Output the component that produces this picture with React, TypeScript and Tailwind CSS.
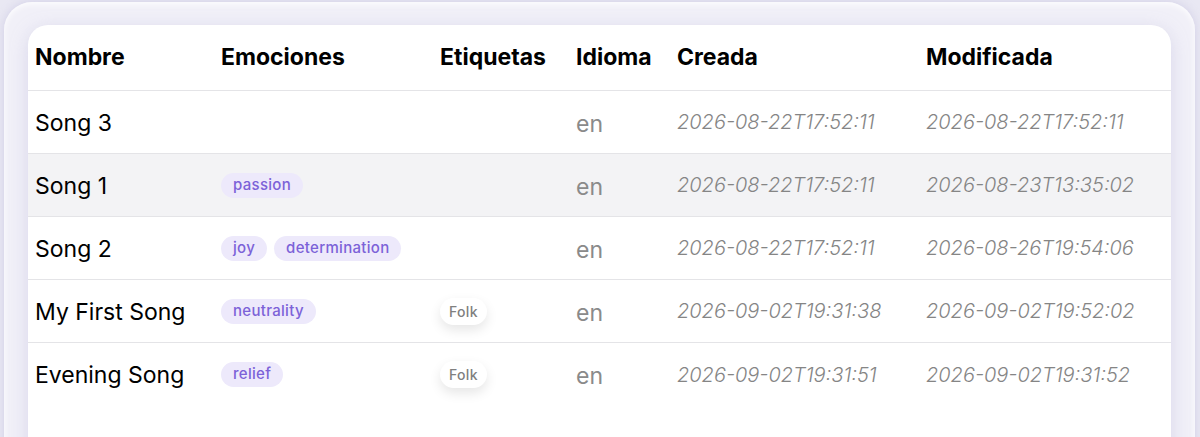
import React from "react";

type Row = {
  name: string;
  emotions: string[];
  tags: string[];
  lang: string;
  created: string;
  modified: string;
};

const rows: Row[] = [
  { name: "Song 3", emotions: [], tags: [], lang: "en", created: "2026-08-22T17:52:11", modified: "2026-08-22T17:52:11" },
  { name: "Song 1", emotions: ["passion"], tags: [], lang: "en", created: "2026-08-22T17:52:11", modified: "2026-08-23T13:35:02" },
  { name: "Song 2", emotions: ["joy", "determination"], tags: [], lang: "en", created: "2026-08-22T17:52:11", modified: "2026-08-26T19:54:06" },
  { name: "My First Song", emotions: ["neutrality"], tags: ["Folk"], lang: "en", created: "2026-09-02T19:31:38", modified: "2026-09-02T19:52:02" },
  { name: "Evening Song", emotions: ["relief"], tags: ["Folk"], lang: "en", created: "2026-09-02T19:31:51", modified: "2026-09-02T19:31:52" },
];

const cols = "grid grid-cols-[186px_219px_136px_101px_249px_1fr]";

export default function App() {
  return (
    <div className="h-[437px] w-[1200px] overflow-hidden bg-[#e9e8f3] font-['Inter',sans-serif]">
      <div className="ml-[4px] mr-[5px] mt-[2px] h-[600px] rounded-[28px] bg-[#f1f0f8] px-[24px] pt-[23px] shadow-[inset_0_2px_6px_rgba(255,255,255,0.9),0_0_10px_rgba(180,176,215,0.45)]">
        <div className="h-[560px] rounded-[20px] bg-white shadow-[0_4px_18px_rgba(170,165,210,0.35)]">
          <div className={`${cols} h-[66px] items-center border-b border-[#e4e4e7] text-[23px] font-bold text-black`}>
            <div className="pl-[7px]">Nombre</div>
            <div className="pl-[7px]">Emociones</div>
            <div className="pl-[7px]">Etiquetas</div>
            <div className="pl-[7px]">Idioma</div>
            <div className="pl-[7px]">Creada</div>
            <div className="pl-[7px]">Modificada</div>
          </div>
          {rows.map((r, i) => (
            <div
              key={r.name}
              className={`${cols} h-[63px] items-center ${i < rows.length - 1 ? "border-b border-[#e4e4e7]" : ""} ${i === 1 ? "bg-[#f3f3f5]" : ""}`}
            >
              <div className="pl-[7px] pt-[2px] text-[23px] text-black">{r.name}</div>
              <div className="flex gap-[7px] pl-[7px]">
                {r.emotions.map((e) => (
                  <span
                    key={e}
                    className="rounded-full bg-[#ede9fb] px-[12px] pb-[3px] pt-[2px] text-[15px] font-medium leading-[20px] tracking-[0.3px] text-[#7c62d8]"
                  >
                    {e}
                  </span>
                ))}
              </div>
              <div className="flex pl-[7px]">
                {r.tags.map((t) => (
                  <span
                    key={t}
                    className="rounded-full bg-white px-[9px] py-[4px] text-[14px] font-medium leading-[19px] tracking-[0.3px] text-[#808080] shadow-[0_5px_12px_rgba(0,0,0,0.10)]"
                  >
                    {t}
                  </span>
                ))}
              </div>
              <div className="pl-[7px] pt-[4px] text-[23px] text-[#8a8a8a]">{r.lang}</div>
              <div className="pl-[7px] text-[20px] font-light italic text-[#858585]">{r.created}</div>
              <div className="pl-[7px] text-[20px] font-light italic text-[#858585]">{r.modified}</div>
            </div>
          ))}
        </div>
      </div>
    </div>
  );
}
